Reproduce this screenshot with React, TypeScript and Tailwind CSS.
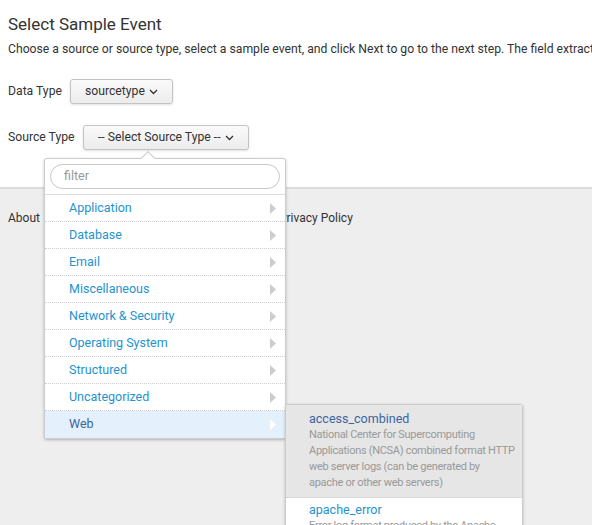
import React from 'react';

const CATEGORIES = [
  'Application',
  'Database',
  'Email',
  'Miscellaneous',
  'Network & Security',
  'Operating System',
  'Structured',
  'Uncategorized',
  'Web',
];

function Caret() {
  return (
    <svg width="9" height="6" viewBox="0 0 9 6" className="ml-1">
      <path d="M1 1l3.5 3.5L8 1" fill="none" stroke="#333" strokeWidth="1.3" />
    </svg>
  );
}

function Triangle({ active }: { active: boolean }) {
  return (
    <svg width="6" height="11" viewBox="0 0 6 11">
      <path d="M0 0l6 5.5L0 11z" fill={active ? '#ffffff' : '#cccccc'} />
    </svg>
  );
}

export default function App() {
  return (
    <div className="relative min-h-[525px] bg-[#eeeeee] text-[#333] font-['Roboto',sans-serif] overflow-hidden">
      <div className="bg-white h-[189px] px-2 pt-[12px] border-b-[2px] border-[#dddddd]">
        <h1 className="text-[17px] leading-6 text-[#333]">Select Sample Event</h1>
        <p className="text-[12.2px] leading-5 mt-[3px] whitespace-nowrap">
          Choose a source or source type, select a sample event, and click Next to go to the next step. The field extractor will use the event to extract fields.
        </p>
        <div className="flex items-center mt-[20px] text-[12.2px]">
          <span className="w-[62px]">Data Type</span>
          <button className="h-[25px] px-[14px] flex items-center rounded-[3px] border border-[#c3c3c3] bg-gradient-to-b from-[#fafafa] to-[#ececec] shadow-sm">
            sourcetype <Caret />
          </button>
        </div>
        <div className="flex items-center mt-[21px] text-[12.2px]">
          <span className="w-[75px]">Source Type</span>
          <button className="h-[25px] px-[14px] flex items-center rounded-[3px] border border-[#c3c3c3] bg-gradient-to-b from-[#fafafa] to-[#ececec] shadow-sm">
            -- Select Source Type -- <Caret />
          </button>
        </div>
      </div>

      <div className="flex px-2 pt-[20px] text-[12px]">
        <span>About</span>
        <span className="ml-[239px]">Privacy Policy</span>
      </div>

      {/* source type popover */}
      <div className="absolute left-[44px] top-[158px] w-[242px] bg-white border border-[#cccccc] rounded-[3px] shadow-[0_1px_3px_rgba(0,0,0,0.25)]">
        <div className="absolute -top-[6px] left-[98px] w-[10px] h-[10px] bg-white border-l border-t border-[#cccccc] rotate-45" />
        <div className="relative p-[5px] pb-[5px] border-b border-[#dddddd]">
          <div className="h-[25px] rounded-full border border-[#c8c8c8] px-[13px] flex items-center text-[12.5px] text-[#999]">
            filter
          </div>
        </div>
        {CATEGORIES.map((c, i) => {
          const active = c === 'Web';
          return (
            <div
              key={c}
              className={`h-[27px] flex items-center justify-between pl-[24px] pr-[9px] text-[12.5px] ${
                i < CATEGORIES.length - 1 ? 'border-b border-dotted border-[#cfcfcf]' : ''
              } ${active ? 'bg-[#e4f1fc] text-[#3a64a3]' : 'text-[#1e93d0]'}`}
            >
              <span>{c}</span>
              <Triangle active={active} />
            </div>
          );
        })}
      </div>

      {/* Web submenu */}
      <div className="absolute left-[285px] top-[404px] w-[238px] bg-white border border-[#cccccc] rounded-[3px] shadow-[0_1px_3px_rgba(0,0,0,0.25)] overflow-hidden">
        <div className="bg-[#e6e6e6] pl-[23px] pr-[7px] pt-[5px] pb-[6px] border-b border-dotted border-[#cfcfcf]">
          <div className="text-[12.5px] leading-[17px] text-[#3a64a3]">access_combined</div>
          <div className="text-[11px] leading-[16px] tracking-[-0.3px] text-[#999]">
            National Center for Supercomputing Applications (NCSA) combined format HTTP web server logs (can be generated by apache or other web servers)
          </div>
        </div>
        <div className="pl-[23px] pr-[7px] pt-[3px] pb-[10px]">
          <div className="text-[12.5px] leading-[17px] text-[#1e93d0]">apache_error</div>
          <div className="text-[11px] leading-[16px] tracking-[-0.3px] text-[#999]">Error log format produced by the Apache web server</div>
        </div>
      </div>
    </div>
  );
}
